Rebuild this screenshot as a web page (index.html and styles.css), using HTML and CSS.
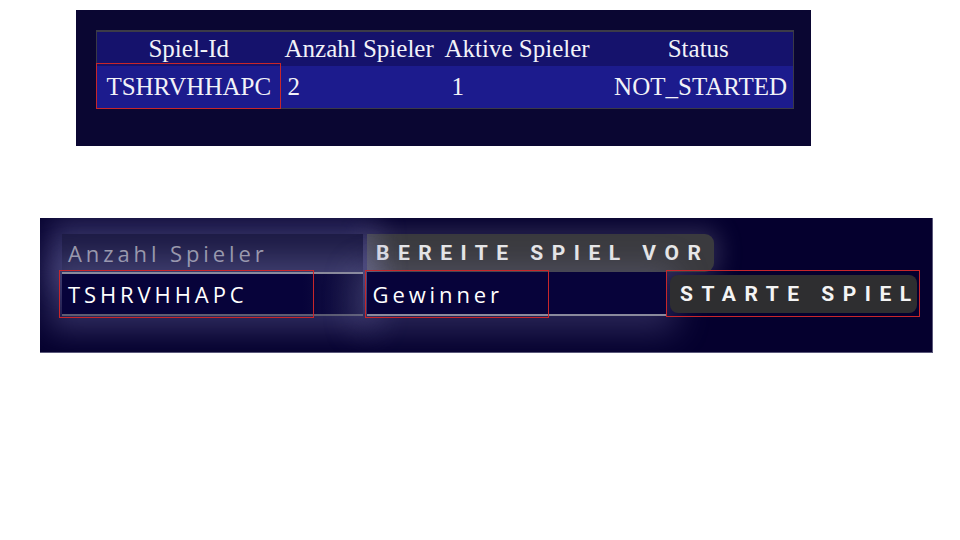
FILE: index.html
```html
<!DOCTYPE html>
<html>
<head>
<meta charset="utf-8">
<link rel="stylesheet" href="styles.css">
</head>
<body>
<section class="games">
  <table class="gtable">
    <colgroup><col class="c1"><col class="c2"><col class="c3"><col class="c4"></colgroup>
    <thead>
      <tr class="hrow">
        <th class="h-center">Spiel-Id</th>
        <th class="h-left">Anzahl Spieler</th>
        <th class="h-left">Aktive Spieler</th>
        <th class="h-center">Status</th>
      </tr>
    </thead>
    <tbody>
      <tr class="brow">
        <td class="b-id"><span class="hl hl-id"></span>TSHRVHHAPC</td>
        <td class="b-count">2</td>
        <td class="b-active">1</td>
        <td class="b-status">NOT_STARTED</td>
      </tr>
    </tbody>
  </table>
</section>

<section class="control">
  <div class="row row1">
    <div class="field field-players">Anzahl Spieler</div>
    <div class="btn btn-prepare">BEREITE SPIEL VOR</div>
  </div>
  <div class="row row2">
    <div class="field field-id"><span class="hl hl-fid"></span>TSHRVHHAPC</div>
    <div class="field field-winner"><span class="hl hl-win"></span>Gewinner</div>
    <div class="start-wrap"><span class="hl hl-start"></span><div class="btn btn-start">STARTE SPIEL</div></div>
  </div>
</section>
</body>
</html>
```
FILE: styles.css
```css
html, body { margin: 0; padding: 0; background: #ffffff; }

.games {
  margin: 10px 0 0 76px;
  width: 735px;
  height: 136px;
  box-sizing: border-box;
  padding: 20px 18px 0 20px;
  background: #0a0632;
}

.gtable {
  width: 697px;
  table-layout: fixed;
  border-collapse: collapse;
  font-family: "Liberation Serif", serif;
  font-size: 25px;
  color: #f2f2f8;
  border: 1px solid #3a3946;
  border-top: 2px solid #3c3b48;
}
.c1 { width: 184px; }
.c2 { width: 160px; }
.c3 { width: 163px; }
.c4 { width: 190px; }

.hrow { background: #15126c; height: 35px; }
.hrow th { font-weight: normal; padding: 0; line-height: 34px; white-space: nowrap; }
.h-center { text-align: center; }
.h-left { text-align: left; padding-left: 4px !important; }

.brow { background: #1c1b8d; height: 42px; }
.brow td { padding: 0; line-height: 42px; white-space: nowrap; position: relative; }
.b-id { text-align: center; }
.b-count { padding-left: 7px !important; }
.b-active { padding-left: 11px !important; }
.b-status { text-align: right; padding-right: 6px !important; }

.hl { position: absolute; border: 1px solid #c8262a; pointer-events: none; }
.hl-id { left: -1px; top: -3px; right: 0; bottom: -1px; }

.control {
  margin: 72px 0 0 40px;
  width: 893px;
  height: 135px;
  box-sizing: border-box;
  padding: 16px 12px 0 22px;
  background: #05002e;
  border-right: 1px solid #5a587a;
  border-bottom: 1px solid #5a587a;
  overflow: hidden;
  font-family: "Open Sans", sans-serif;
}

.row { display: flex; align-items: stretch; }
.row1 { height: 38px; gap: 4px; }
.row2 { height: 44px; }

.field {
  position: relative;
  box-sizing: border-box;
  font-size: 22px;
  font-weight: 500;
  letter-spacing: 3.9px;
  padding-left: 6px;
  display: flex;
  align-items: center;
}
.field-players {
  width: 301px;
  color: #9a99a8;
  background: #1c1a44;
  box-shadow: 0 0 30px 14px rgba(150, 150, 210, 0.32);
}
.field-id {
  width: 301px;
  color: #ffffff;
  background: linear-gradient(90deg, #07033a 80%, #1a1846 100%);
  border-top: 2px solid #8a8a9c;
  border-bottom: 2px solid #5c5c72;
  box-shadow: 0 0 32px 14px rgba(150, 150, 210, 0.32);
}
.field-winner {
  width: 300px;
  margin-left: 4px;
  padding-left: 6px;
  color: #ffffff;
  background: #07033a;
  border-top: 2px solid #07033a;
  border-bottom: 2px solid #8a8a9c;
  box-shadow: 0 6px 34px 10px rgba(150, 150, 210, 0.26);
}
.hl-fid { left: -3px; top: -4px; width: 253px; bottom: -4px; }
.hl-win { left: -2px; top: -4px; width: 182px; bottom: -4px; }

.btn {
  box-sizing: border-box;
  font-family: Roboto, "Open Sans", sans-serif;
  font-weight: 700;
  color: #e8e8e8;
  font-size: 21px;
  letter-spacing: 8.5px;
  display: flex;
  align-items: center;
  white-space: nowrap;
}
.btn-prepare {
  width: 347px;
  padding-left: 9px;
  background: #3a3a3e;
  border-radius: 0 9px 9px 0;
  box-shadow: 0 0 22px 6px rgba(140, 140, 170, 0.28);
}
.start-wrap {
  position: relative;
  width: 254px;
  display: flex;
  align-items: center;
  padding: 2px 3px 2px 4px;
  box-sizing: border-box;
}
.hl-start { left: 0; top: -2px; right: 0; bottom: -1px; }
.btn-start {
  width: 247px;
  height: 38px;
  padding-left: 10px;
  background: #2e2e30;
  border-radius: 8px;
  color: #f4f4f4;
}
```
